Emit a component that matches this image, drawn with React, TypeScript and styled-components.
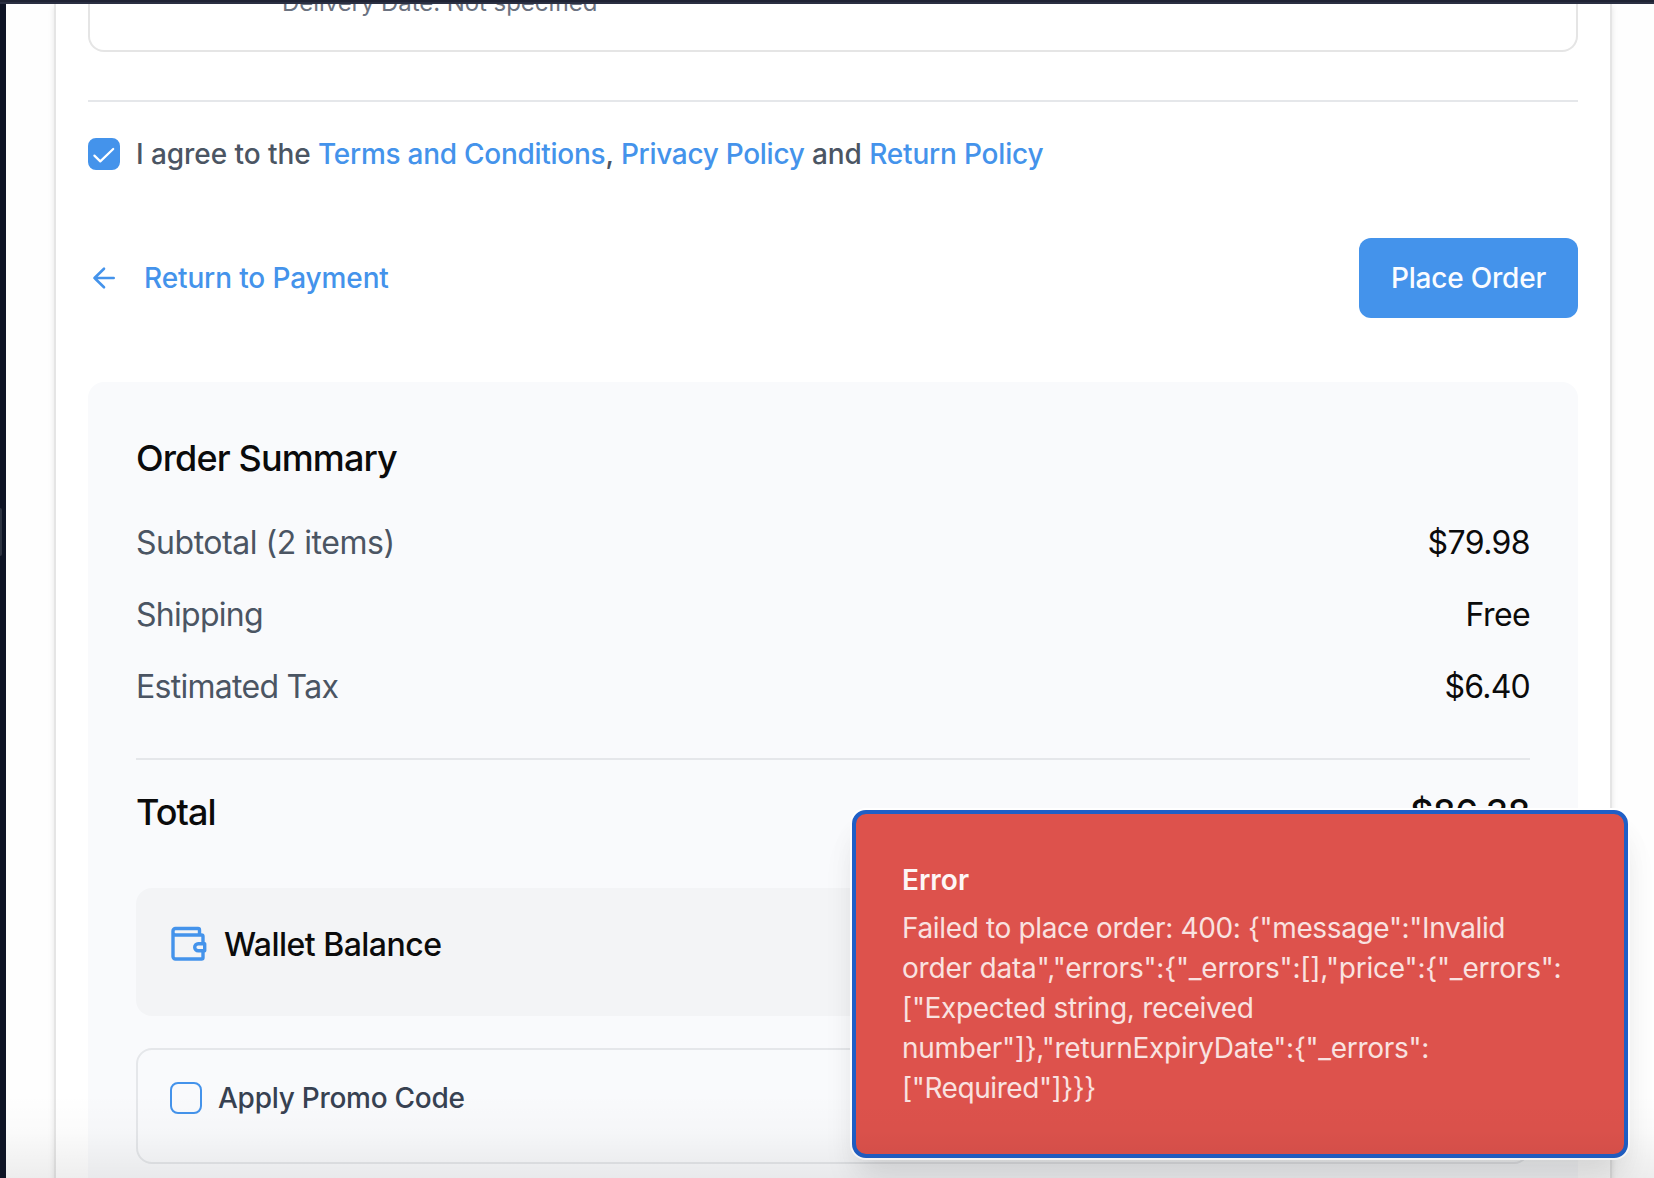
import React from "react";
import styled, { createGlobalStyle } from "styled-components";

const blue = "#4493eb";
const line = "#e5e7ea";

const Global = createGlobalStyle`
  * { box-sizing: border-box; }
  body { margin: 0; background: #fff; overflow: hidden; }
  button, a { font: inherit; letter-spacing: inherit; }
`;

const Screen = styled.div`
  position: relative;
  display: grid;
  grid-template: 4px 1fr / 6px 1fr;
  width: 1654px;
  height: 1178px;
  overflow: hidden;
  background: #fefefe;
  font-family: Inter, "Liberation Sans", sans-serif;
  color: #0b0b0b;
  -webkit-font-smoothing: antialiased;
`;

const TopEdge = styled.div`
  grid-column: 1 / -1;
  background: #1f2334;
  border-bottom: 2px solid #2a2f42;
`;

const SideEdge = styled.div`
  background: #0e1425;
  padding-top: 504px;
`;

const Thumb = styled.div`
  width: 2px;
  height: 48px;
  background: #2d3341;
  border-radius: 0 2px 2px 0;
`;

const Main = styled.main`
  padding: 0 42px 0 48px;
  min-width: 0;
  overflow: hidden;
`;

const Card = styled.section`
  height: 1240px;
  padding: 0 32px;
  background: #fff;
  border: 2px solid #e5e5e5;
  border-width: 0 2px;
  box-shadow: 0 2px 6px rgba(0, 0, 0, 0.1);
`;

const ItemBox = styled.div`
  height: 48px;
  border: 2px solid #e5e5e5;
  border-top: 0;
  border-radius: 0 0 16px 16px;
  overflow: hidden;
  padding-left: 192px;
`;

const Delivery = styled.p`
  margin: -17px 0 0;
  font-size: 24px;
  line-height: 32px;
  letter-spacing: -0.06px;
  color: #6b7280;
`;

const Divider = styled.hr<{ $top: number }>`
  height: 2px;
  border: 0;
  margin: ${(p) => p.$top}px 0 0;
  background: ${line};
`;

const CheckRow = styled.label<{ $gap: number; $tone: string }>`
  display: flex;
  align-items: center;
  gap: ${(p) => p.$gap}px;
  height: 32px;
  font-size: 28px;
  line-height: 32px;
  font-weight: 500;
  white-space: nowrap;
  color: ${(p) => p.$tone};
`;

const AgreeRow = styled(CheckRow)`
  margin-top: 36px;
`;

const Box = styled.span<{ $checked?: boolean }>`
  display: grid;
  place-items: center;
  flex: none;
  width: 32px;
  height: 32px;
  border: 2px solid ${blue};
  border-radius: 8px;
  background: ${(p) => (p.$checked ? blue : "transparent")};
`;

const Label = styled.span<{ $track?: number }>`
  letter-spacing: ${(p) => p.$track ?? 0}px;
`;

const Link = styled.a<{ $track: number }>`
  color: ${blue};
  letter-spacing: ${(p) => p.$track}px;
`;

const Actions = styled.div`
  display: flex;
  align-items: center;
  justify-content: space-between;
  height: 80px;
  margin-top: 68px;
`;

const BackLink = styled.a`
  display: flex;
  align-items: center;
  gap: 24px;
  color: ${blue};
  font-size: 28px;
  font-weight: 500;
`;

const PrimaryButton = styled.button`
  width: 219px;
  height: 80px;
  padding: 0;
  border: 0;
  border-radius: 12px;
  background: ${blue};
  color: #fafcff;
  font-size: 28px;
  font-weight: 500;
  white-space: nowrap;
`;

const Summary = styled.section`
  height: 860px;
  margin-top: 64px;
  padding: 48px;
  border-radius: 16px;
  background: #f9fafc;
`;

const Title = styled.h2`
  margin: 0 0 20px;
  font-size: 36px;
  line-height: 56px;
  font-weight: 500;
`;

const Row = styled.div<{ $strong?: boolean }>`
  display: flex;
  justify-content: space-between;
  font-size: ${(p) => (p.$strong ? 36 : 32)}px;
  font-weight: ${(p) => (p.$strong ? 500 : 400)};
  line-height: ${(p) => (p.$strong ? 56 : 48)}px;
`;

const Rows = styled.div`
  display: flex;
  flex-direction: column;
  gap: 24px;
  padding-top: 13px;
`;

const Muted = styled.span<{ $track?: number }>`
  color: #4b5563;
  letter-spacing: ${(p) => p.$track ?? 0}px;
`;

const TotalRow = styled(Row)`
  margin-top: 24px;
`;

const Wallet = styled.div`
  display: flex;
  align-items: flex-start;
  gap: 16px;
  height: 128px;
  margin-top: 48px;
  padding: 32px;
  border-radius: 16px;
  background: #f3f4f6;
  font-size: 32px;
  line-height: 50px;
  font-weight: 500;
`;

const WalletIcon = styled.svg`
  width: 40px;
  height: 48px;
  flex: none;
`;

const Promo = styled.div`
  height: 116px;
  margin-top: 32px;
  padding: 32px;
  border: 2px solid ${line};
  border-radius: 16px;
`;

const BottomShade = styled.div`
  position: absolute;
  inset: auto 0 0 6px;
  height: 84px;
  background: linear-gradient(rgba(0, 0, 0, 0), rgba(0, 0, 0, 0.015) 45%, rgba(0, 0, 0, 0.065));
`;

const Toast = styled.div`
  position: absolute;
  left: 852px;
  top: 810px;
  width: 776px;
  height: 348px;
  padding: 46px 46px;
  border: 4px solid #205fc6;
  border-radius: 14px;
  background: #dd524c;
  color: #fdf6f6;
  box-shadow: 0 0 0 2px #fff, 0 20px 30px -6px rgba(0, 0, 0, 0.09), 0 28px 40px -4px rgba(0, 0, 0, 0.05);
`;

const ToastTitle = styled.strong`
  display: block;
  font-size: 28px;
  line-height: 40px;
  font-weight: 600;
`;

const ToastLine = styled.div<{ $track: number }>`
  font-size: 28px;
  line-height: 40px;
  letter-spacing: ${(p) => p.$track}px;
  white-space: nowrap;
`;

const ToastBody = styled.div`
  margin-top: 8px;
  color: #f9e2e0;
`;

const message: [string, number][] = [
  ['Failed to place order: 400: {"message":"Invalid', -0.36],
  ['order data","errors":{"_errors":[],"price":{"_errors":', -0.2],
  ['["Expected string, received', -0.33],
  ['number"]},"returnExpiryDate":{"_errors":', -0.28],
  ['["Required"]}}}', -0.43],
];

export default function App() {
  return (
    <Screen>
      <Global />
      <TopEdge />
      <SideEdge>
        <Thumb />
      </SideEdge>
      <Main>
        <Card>
          <ItemBox>
            <Delivery>Delivery Date: Not specified</Delivery>
          </ItemBox>
          <Divider $top={48} />
          <AgreeRow $gap={16} $tone="#4b5563">
            <Box $checked>
              <svg width="26" height="26" viewBox="0 0 26 26" fill="none" stroke="#fff" strokeWidth="2.2" strokeLinecap="round" strokeLinejoin="round">
                <path d="M3.400 14.600 9.300 20.400 22.200 8" />
              </svg>
            </Box>
            <Label $track={-0.06}>
              I agree to the <Link $track={-0.27}>Terms and Conditions</Link>, <Link $track={-0.3}>Privacy Policy</Link> and{" "}
              <Link $track={-0.18}>Return Policy</Link>
            </Label>
          </AgreeRow>
          <Actions>
            <BackLink>
              <svg width="32" height="32" viewBox="0 0 32 32" fill="none" stroke={blue} strokeWidth="2.6" strokeLinecap="round" strokeLinejoin="round">
                <path d="M16 6.700 6.500 16l9.500 9.300M6.500 16h19.200" />
              </svg>
              <Label $track={-0.12}>Return to Payment</Label>
            </BackLink>
            <PrimaryButton>
              <Label $track={-0.19}>Place Order</Label>
            </PrimaryButton>
          </Actions>
          <Summary>
            <Title>
              <Label $track={-0.87}>Order Summary</Label>
            </Title>
            <Rows>
              <Row><Muted $track={-0.47}>Subtotal (2 items)</Muted><Label $track={-0.6}>$79.98</Label></Row>
              <Row><Muted $track={-0.72}>Shipping</Muted><Label $track={-0.6}>Free</Label></Row>
              <Row><Muted $track={-0.72}>Estimated Tax</Muted><Label $track={-0.75}>$6.40</Label></Row>
            </Rows>
            <Divider $top={47} />
            <TotalRow $strong><Label $track={-0.95}>Total</Label><Label $track={-0.5}>$86.38</Label></TotalRow>
            <Wallet>
              <WalletIcon viewBox="0 0 40 48" fill="none" stroke={blue} strokeWidth="3.4" strokeLinejoin="round">
                <path d="M31.500 15V10a1.500 1.500 0 0 0-1.500-1.500H7.500A2.500 2.500 0 0 0 5 11v25.500A2.500 2.500 0 0 0 7.500 39h26a1.500 1.500 0 0 0 1.500-1.500v-6.800M5 12.500A2.500 2.500 0 0 0 7.500 15h26a1.500 1.500 0 0 1 1.500 1.500v7.200" />
                <path d="M36.700 23.700h-6.500a3.500 3.500 0 0 0 0 7h6.500z" />
              </WalletIcon>
              <Label $track={-0.53}>Wallet Balance</Label>
            </Wallet>
            <Promo>
              <CheckRow $gap={16} $tone="#374151">
                <Box />
                <Label $track={-0.26}>Apply Promo Code</Label>
              </CheckRow>
            </Promo>
          </Summary>
        </Card>
      </Main>
      <Toast>
        <ToastTitle>
          <Label>Error</Label>
        </ToastTitle>
        <ToastBody>
          {message.map(([text, track]) => (
            <ToastLine key={text} $track={track}>{text}</ToastLine>
          ))}
        </ToastBody>
      </Toast>
      <BottomShade />
    </Screen>
  );
}
